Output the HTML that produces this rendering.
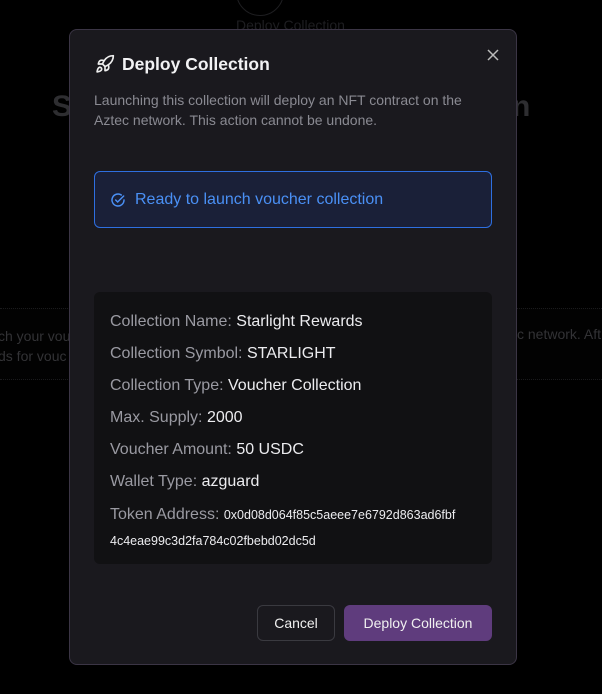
<!DOCTYPE html>
<html><head><style>
*{box-sizing:border-box;margin:0;padding:0}
body{width:602px;height:694px;background:#000;font-family:"Liberation Sans",sans-serif;position:relative;overflow:hidden}
.bg{position:absolute;color:#1e1e21}
.modal{position:absolute;left:69px;top:29px;width:448px;height:636px;background:#1a191e;border:1px solid #3b3545;border-radius:8px}
.title{position:absolute;left:52px;top:24px;color:#f2f2f4;font-size:17.5px;font-weight:bold}
.desc{position:absolute;left:24px;top:60px;width:400px;color:#8a8a92;font-size:14px;line-height:20px}
.ready{position:absolute;left:24px;top:141px;width:398px;height:57px;border:1px solid #2e6fe0;border-radius:6px;background:#1a2038;color:#4a90f5;font-size:16px;display:flex;align-items:center;padding-left:40px}
.info{position:absolute;left:24px;top:262px;width:398px;height:272px;background:#111113;border-radius:6px;padding:21px 16px 0 16px}
.info div{font-size:16px;color:#9a9aa2;height:32px}
.info b{font-weight:normal;color:#ececef}
.info .mono{font-size:12.5px;color:#ececef}
.btn{position:absolute;top:575px;height:36px;border-radius:6px;font-size:14px;color:#f0f0f0;display:flex;align-items:center;justify-content:center}
</style></head><body>
<div style="position:absolute;left:236px;top:-32px;width:48px;height:48px;border:1px solid #1e1e21;border-radius:50%"></div>
<div class="bg" style="left:236px;top:17px;font-size:14px">Deploy Collection</div>
<div class="bg" style="left:52px;top:90px;font-size:30px;font-weight:bold;color:#2e2e31">S</div>
<div class="bg" style="left:512px;top:90px;font-size:30px;font-weight:bold;color:#2e2e31">n</div>
<div style="position:absolute;left:0;top:308px;width:602px;height:72px;border-top:1px dotted #1a1a1c;border-bottom:1px dotted #1a1a1c;background:#020202"></div>
<div class="bg" style="left:-2px;top:326px;font-size:14px;line-height:20px;color:#333336">ch your vou<br>ds for vouc</div>
<div class="bg" style="left:517px;top:326px;font-size:14px;color:#333336;white-space:nowrap">c network. Aft</div>
<div class="modal">
<svg style="position:absolute;left:25px;top:24px" width="20" height="20" viewBox="0 0 24 24" fill="none" stroke="#eee" stroke-width="2" stroke-linecap="round" stroke-linejoin="round"><path d="M4.5 16.5c-1.5 1.26-2 5-2 5s3.74-.5 5-2c.71-.84.7-2.130-.09-2.91a2.18 2.18 0 0 0-2.91-.09z"/><path d="m12 15-3-3a22 22 0 0 1 2-3.95A12.88 12.88 0 0 1 22 2c0 2.72-.78 7.5-6 11a22.350 22.350 0 0 1-4 2z"/><path d="M9 12H4s.55-3.03 2-4c1.62-1.08 5 0 5 0"/><path d="M12 15v5s3.03-.55 4-2c1.08-1.62 0-5 0-5"/></svg>
<div class="title">Deploy Collection</div>
<svg style="position:absolute;left:417px;top:19px" width="12" height="12" viewBox="0 0 12 12" stroke="#bbb" stroke-width="1.5"><path d="M1 1l10 10M11 1L1 11"/></svg>
<div class="desc">Launching this collection will deploy an NFT contract on the Aztec network. This action cannot be undone.</div>
<div class="ready"><svg style="position:absolute;left:15px;top:20px" width="16" height="16" viewBox="0 0 24 24" fill="none" stroke="#4a90f5" stroke-width="2.2" stroke-linecap="round"><path d="M21 12a9 9 0 1 1-4-7.5"/><path d="M8.5 12l3 3 9-9"/></svg>Ready to launch voucher collection</div>
<div class="info">
<div>Collection Name: <b>Starlight Rewards</b></div>
<div>Collection Symbol: <b>STARLIGHT</b></div>
<div>Collection Type: <b>Voucher Collection</b></div>
<div>Max. Supply: <b>2000</b></div>
<div>Voucher Amount: <b>50 USDC</b></div>
<div>Wallet Type: <b>azguard</b></div>
<div style="height:auto;line-height:25px;margin-top:-3px">Token Address: <span class="mono">0x0d08d064f85c5aeee7e6792d863ad6fbf<br>4c4eae99c3d2fa784c02fbebd02dc5d</span></div>
</div>
<div class="btn" style="left:187px;width:78px;border:1px solid #3a3a40">Cancel</div>
<div class="btn" style="left:274px;width:148px;background:#5f3c7d">Deploy Collection</div>
</div>
</body></html>
